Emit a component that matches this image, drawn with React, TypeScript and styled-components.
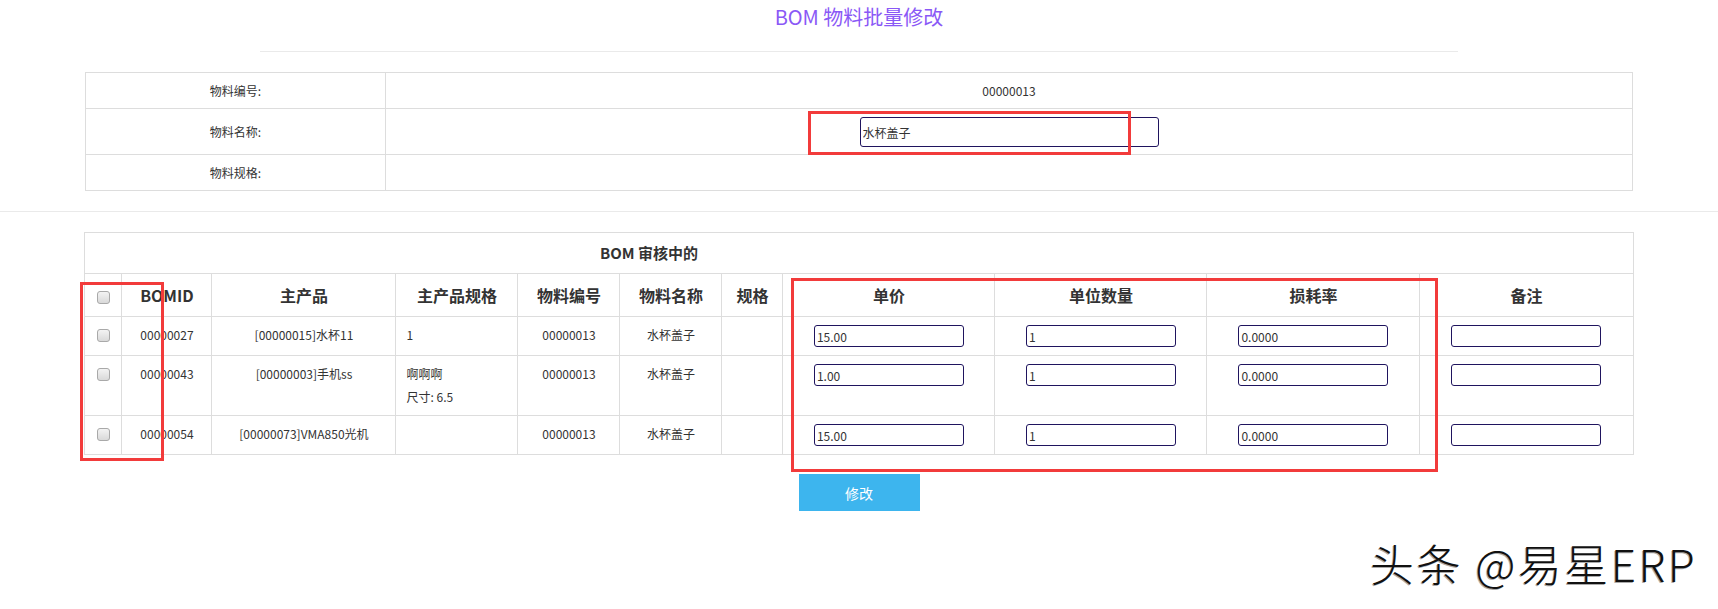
import React from "react";
import styled, { createGlobalStyle } from "styled-components";

const GlobalStyle = createGlobalStyle`
  html, body {
    margin: 0;
    padding: 0;
    background: #fff;
  }
  body {
    font-family: "Noto Sans CJK SC", "Open Sans", sans-serif;
    color: #333;
  }
`;

const Page = styled.div`
  position: relative;
  width: 1718px;
  min-height: 609px;
  overflow: hidden;
`;

const Title = styled.h2`
  margin: 3px 0 0;
  font-size: 20px;
  line-height: 28px;
  font-weight: 400;
  text-align: center;
  color: #8a58f6;
`;

const Rule = styled.hr<{ $full?: boolean }>`
  border: 0;
  border-top: 1px solid #eaeaea;
  width: ${(p) => (p.$full ? "100%" : "1198px")};
  margin: 20px auto;
`;

const InfoTable = styled.table`
  width: 1548px;
  margin: 0 auto;
  border-collapse: collapse;
  table-layout: fixed;
  font-size: 12px;

  td {
    border: 1px solid #ddd;
    padding: 8px 8px 7px;
    line-height: 20px;
    text-align: center;
    vertical-align: middle;
  }
`;

const NameInput = styled.input`
  box-sizing: border-box;
  width: 299px;
  height: 30px;
  border: 1px solid #1f145e;
  border-radius: 3px;
  padding: 0 2px;
  font: 12px "Noto Sans CJK SC", sans-serif;
  color: #333;
  outline: none;
`;

const BomTable = styled.table`
  width: 1548px;
  margin: 0 auto;
  border-collapse: collapse;
  table-layout: fixed;
  font-size: 12px;
`;

const Caption = styled.th`
  border: 1px solid #ddd;
  padding: 8px 420px 8px 0;
  font-size: 15px;
  line-height: 24px;
  font-weight: 700;
  text-align: center;
`;

const HeadCell = styled.th`
  border: 1px solid #ddd;
  padding: 10px 4px;
  font-size: 16px;
  line-height: 22px;
  font-weight: 700;
  text-align: center;
  color: #333;
`;

const Cell = styled.td<{ $left?: boolean }>`
  border: 1px solid #ddd;
  padding: ${(p) => (p.$left ? "8px 8px 8px 10px" : "8px 8px")};
  line-height: 20px;
  vertical-align: top;
  text-align: ${(p) => (p.$left ? "left" : "center")};
`;

const SpecLine = styled.div`
  & + & {
    margin-top: 3px;
  }
`;

const Check = styled.input.attrs({ type: "checkbox" })`
  appearance: none;
  display: block;
  width: 13px;
  height: 13px;
  margin: 4px auto 0;
  border: 1px solid #a9a9a9;
  border-radius: 3px;
  background: linear-gradient(#f3f3f3, #d9d9d9);
  box-sizing: border-box;
`;

const Field = styled.input`
  box-sizing: border-box;
  display: block;
  width: 150px;
  height: 22px;
  margin: 0 auto;
  border: 1px solid #1f145e;
  border-radius: 3px;
  padding: 0 2px;
  font: 12px "Noto Sans CJK SC", sans-serif;
  color: #333;
  outline: none;
`;

const SubmitButton = styled.button`
  display: block;
  width: 121px;
  height: 37px;
  margin: 19px auto 0;
  border: 0;
  background: #3db5ee;
  color: #fff;
  font: 14px "Noto Sans CJK SC", sans-serif;
`;

const Mark = styled.div<{ $x: number; $y: number; $w: number; $h: number }>`
  position: absolute;
  left: ${(p) => p.$x}px;
  top: ${(p) => p.$y}px;
  width: ${(p) => p.$w}px;
  height: ${(p) => p.$h}px;
  box-sizing: border-box;
  border: 3px solid #f23b3b;
  pointer-events: none;
`;

const Watermark = styled.div`
  position: absolute;
  left: 1370px;
  top: 538px;
  font-size: 44px;
  line-height: 50px;
  font-weight: 300;
  letter-spacing: 2.5px;
  color: #111;
  white-space: nowrap;
  text-shadow: -1px 1px 0 #aaa;
`;

const cols = [37, 90, 184, 122, 102, 102, 61, 212, 212, 213, 213];

const heads = ["BOMID", "主产品", "主产品规格", "物料编号", "物料名称", "规格", "单价", "单位数量", "损耗率", "备注"];

const rows = [
  { id: "00000027", product: "[00000015]水杯11", spec: ["1"], price: "15.00" },
  { id: "00000043", product: "[00000003]手机ss", spec: ["啊啊啊", "尺寸: 6.5"], price: "1.00" },
  { id: "00000054", product: "[00000073]VMA850光机", spec: [], price: "15.00" },
];

export default function App() {
  return (
    <Page>
      <GlobalStyle />
      <Title>BOM 物料批量修改</Title>
      <Rule />

      <InfoTable>
        <colgroup>
          <col style={{ width: 300 }} />
          <col />
        </colgroup>
        <tbody>
          <tr>
            <td>物料编号:</td>
            <td>00000013</td>
          </tr>
          <tr>
            <td>物料名称:</td>
            <td>
              <NameInput defaultValue="水杯盖子" />
            </td>
          </tr>
          <tr>
            <td>物料规格:</td>
            <td></td>
          </tr>
        </tbody>
      </InfoTable>

      <Rule $full />

      <BomTable>
        <colgroup>
          {cols.map((w, i) => (
            <col key={i} style={{ width: w }} />
          ))}
        </colgroup>
        <thead>
          <tr>
            <Caption colSpan={11}>BOM 审核中的</Caption>
          </tr>
          <tr>
            <HeadCell>
              <Check />
            </HeadCell>
            {heads.map((h) => (
              <HeadCell key={h}>{h}</HeadCell>
            ))}
          </tr>
        </thead>
        <tbody>
          {rows.map((r) => (
            <tr key={r.id}>
              <Cell>
                <Check />
              </Cell>
              <Cell>{r.id}</Cell>
              <Cell>{r.product}</Cell>
              <Cell $left>
                {r.spec.map((s) => (
                  <SpecLine key={s}>{s}</SpecLine>
                ))}
              </Cell>
              <Cell>00000013</Cell>
              <Cell>水杯盖子</Cell>
              <Cell></Cell>
              <Cell>
                <Field defaultValue={r.price} />
              </Cell>
              <Cell>
                <Field defaultValue="1" />
              </Cell>
              <Cell>
                <Field defaultValue="0.0000" />
              </Cell>
              <Cell>
                <Field defaultValue="" />
              </Cell>
            </tr>
          ))}
        </tbody>
      </BomTable>

      <SubmitButton>修改</SubmitButton>

      <Mark $x={808} $y={111} $w={323} $h={44} />
      <Mark $x={80} $y={282} $w={84} $h={179} />
      <Mark $x={791} $y={278} $w={647} $h={194} />

      <Watermark>头条 @易星ERP</Watermark>
    </Page>
  );
}
